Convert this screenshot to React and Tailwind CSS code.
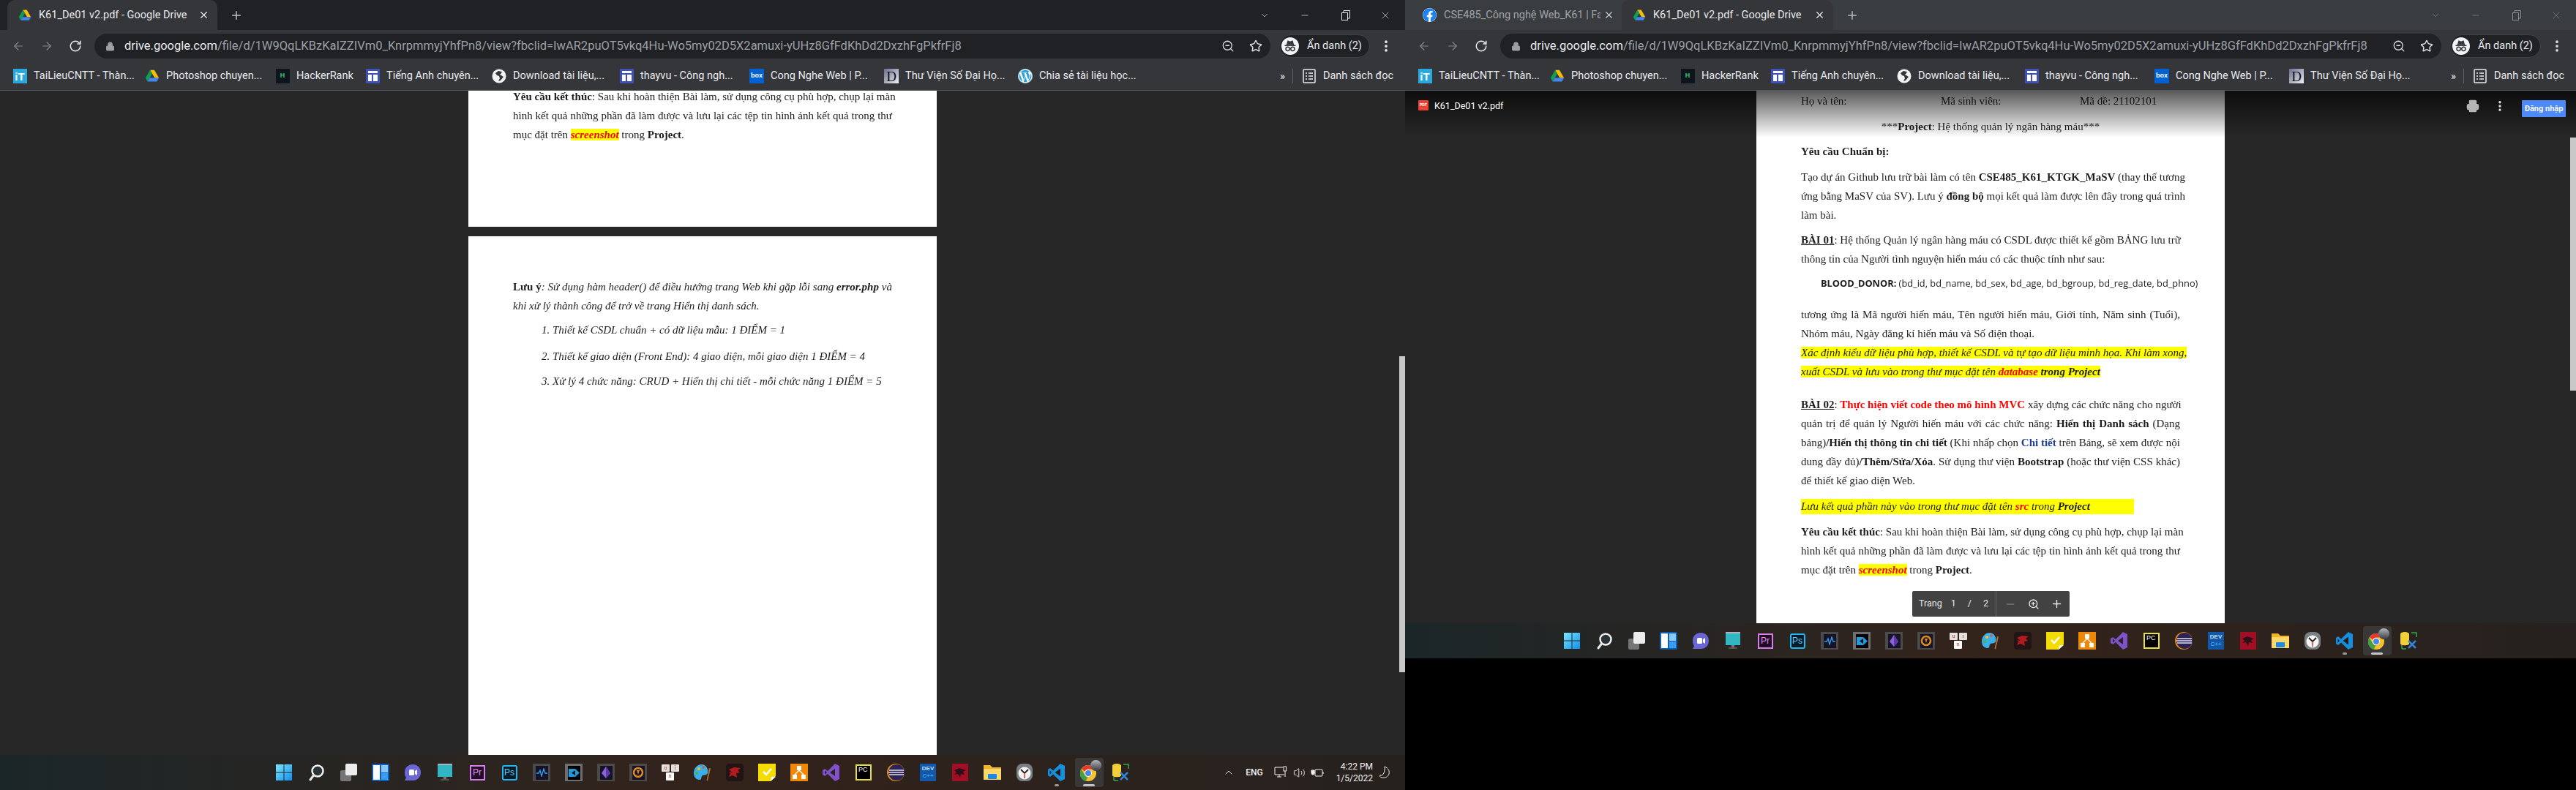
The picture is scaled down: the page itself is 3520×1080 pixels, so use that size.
import { ArrowLeft, ArrowRight, ChevronDown, ChevronUp, EllipsisVertical, Lock, Minus, Plus, Printer, RotateCw, Star, Volume2, X, ZoomIn, ZoomOut } from "lucide-react"
import { FaFacebook, FaWordpress } from "react-icons/fa"

const URL_PATH = "/file/d/1W9QqLKBzKaIZZIVm0_KnrpmmyjYhfPn8/view?fbclid=IwAR2puOT5vkq4Hu-Wo5my02D5X2amuxi-yUHz8GfFdKhDd2DxzhFgPkfrFj8"

const DriveIcon = ({ size = 20 }) => (
    <svg width={size} height={size} viewBox="0 0 24 24">
        <path d="M8.5 2h7L23 15h-7z" fill="#fbbc04" />
        <path d="M8.5 2 1 15l3.5 6L12 8.200z" fill="#0f9d58" />
        <path d="M4.500 21h15L23 15H8z" fill="#4285f4" />
    </svg>
)

const Incognito = () => (
    <span className="flex size-[24px] items-center justify-center rounded-full bg-[#f1f3f4]">
        <svg width="18" height="18" viewBox="0 0 24 24" fill="none" stroke="#35363a" strokeWidth="2">
            <path d="M2 11h20M6 10l2-7 4 1.500L16 3l2 7" fill="#35363a" />
            <circle cx="7.500" cy="17" r="3.500" />
            <circle cx="16.500" cy="17" r="3.500" />
            <path d="M11 17h2" />
        </svg>
    </span>
)

const ReadingList = () => (
    <svg width="18" height="20" viewBox="0 0 18 20" fill="none" stroke="#e8eaed" strokeWidth="1.500">
        <rect x="1" y="1" width="16" height="18" rx="1" />
        <path d="M4 6h2M8 6h6M4 10h2M8 10h6M4 14h2M8 14h6" />
    </svg>
)

// bookmark favicons
const BlueForm = () => (
    <span className="flex h-[20px] w-[19px] flex-col gap-[2px] bg-[#3f51b5] p-[3px]">
        <span className="h-[3px] bg-white" />
        <span className="flex flex-1 gap-[2px]">
            <span className="flex-1 bg-white" />
            <span className="flex-1 bg-white" />
        </span>
    </span>
)

const BOOKMARKS = [
    { label: "TaiLieuCNTT - Thàn...", width: "w-[181px]", icon: <span className="flex h-[20px] w-[19px] items-center justify-center bg-[#29a8e0] font-['Liberation_Sans',sans-serif] text-[15px] leading-none font-bold text-white">iT</span> },
    { label: "Photoshop chuyen...", width: "w-[178px]", icon: <DriveIcon /> },
    { label: "HackerRank", width: "w-[123px]", icon: <span className="flex h-[20px] w-[19px] items-center justify-center bg-[#0e141e] font-['Liberation_Sans',sans-serif] text-[9px] font-bold text-[#2ec866]">H</span> },
    { label: "Tiếng Anh chuyên...", width: "w-[173px]", icon: <BlueForm /> },
    { label: "Download tài liệu,...", width: "w-[174px]", icon: <svg width="20" height="20" viewBox="0 0 20 20"><circle cx="10" cy="10" r="9.500" fill="#f1f3f4" /><path d="M9 3 5 6l2 3 3 1 1 3-2 4 3-1 4-5-3-2-2-1 2-2 1-2z" fill="#35363a" /></svg> },
    { label: "thayvu - Công ngh...", width: "w-[178px]", icon: <BlueForm /> },
    { label: "Cong Nghe Web | P...", width: "w-[184px]", icon: <span className="flex h-[20px] w-[20px] items-center justify-center rounded-[1px] bg-[#0061d5] font-['Liberation_Sans',sans-serif] text-[9px] font-bold text-white">box</span> },
    { label: "Thư Viện Số Đại Họ...", width: "w-[183px]", icon: <span className="flex h-[20px] w-[20px] items-center justify-center bg-linear-to-br from-[#6a6f8f] to-[#f0f0f5] font-['Liberation_Serif',serif] text-[19px] leading-none text-[#111]">D</span> },
    { label: "Chia sẻ tài liệu học...", width: "w-[158px]", icon: <FaWordpress size={20} className="text-[#2d9fd9] bg-white rounded-full" /> },
]

const Bookmarks = ({ showCount }) => (
    <div className="flex h-[38px] items-center bg-[#35363a] pl-[17px] pr-[16px]">
        {BOOKMARKS.slice(0, showCount).map((b) => (
            <div key={b.label} className={`flex shrink-0 items-center gap-[9px] ${b.width}`}>
                <span className="flex w-[20px] shrink-0 justify-center">{b.icon}</span>
                <span className="text-[14.500px] whitespace-nowrap text-[#e8eaed]">{b.label}</span>
            </div>
        ))}
        <div className="ml-auto flex items-center">
            <span className="text-[15px] text-[#e8eaed]">»</span>
            <span className="ml-[10px] h-[20px] w-px bg-[#5f6368]" />
            <span className="ml-[13px]"><ReadingList /></span>
            <span className="ml-[10px] text-[14.500px] whitespace-nowrap text-[#e8eaed]">Danh sách đọc</span>
        </div>
    </div>
)

const Tab = ({ icon, title, active, width, muted }) => (
    <div className={`flex h-[41px] shrink-0 items-center ${width} ${active ? "rounded-t-[10px] bg-[#35363a] pl-[15px] pr-[11px]" : "pl-[24px] pr-[10px]"}`}>
        <span className="shrink-0">{icon}</span>
        <span className={`ml-[10px] mr-[4px] flex-1 overflow-hidden text-[14.500px] whitespace-nowrap ${muted ? "text-[#9ea2a6]" : "text-[#e8eaed]"}`}>{title}</span>
        <X size={15} strokeWidth={2} className={`shrink-0 ${muted ? "text-[#c4c7ca]" : "text-[#e8eaed]"}`} />
    </div>
)

const WindowControls = ({ dim }) => {
    const color = dim ? "text-[#8a8d90]" : "text-[#e8eaed]"
    return (
        <div className={`ml-auto flex items-center ${color}`}>
            <ChevronDown size={14} strokeWidth={1.200} />
            <Minus size={14} strokeWidth={1.200} className="ml-[41px]" />
            <svg width="12" height="14" viewBox="0 0 12 14" fill="none" stroke="currentColor" className="ml-[43px]">
                <rect x="0.500" y="3.500" width="8" height="10" />
                <path d="M3 3V0.500h8.500V11H9" />
            </svg>
            <X size={16} strokeWidth={1} className="ml-[40px] mr-[19px]" />
        </div>
    )
}

const Toolbar = ({ leftPad, dim }) => (
    <div className="flex h-[44px] items-center bg-[#35363a]">
        <div className={`flex items-center ${leftPad}`}>
            <ArrowLeft size={18} strokeWidth={1.500} className="text-[#85888c]" />
            <ArrowRight size={18} strokeWidth={1.500} className="ml-[21px] text-[#85888c]" />
            <RotateCw size={18} strokeWidth={2} className="ml-[21px] text-[#e8eaed]" />
        </div>
        <div className="ml-[17px] flex h-[34px] min-w-0 flex-1 items-center rounded-full bg-[#202124] pl-[15px] pr-[11px]">
            <Lock size={13} className="shrink-0 text-[#9aa0a6]" fill="#9aa0a6" />
            <span className="ml-[13px] min-w-0 flex-1 overflow-hidden text-[16.500px] leading-[22px] whitespace-nowrap">
                <span className="text-[#e8eaed]">drive.google.com</span>
                <span className="text-[#9aa0a6]">{URL_PATH}</span>
            </span>
            <ZoomOut size={18} strokeWidth={1.700} className="ml-[8px] shrink-0 text-[#dadce0]" />
            <Star size={18} strokeWidth={2} className="ml-[20px] shrink-0 text-[#dadce0]" />
        </div>
        <div className="ml-[12px] flex h-[32px] w-[124px] items-center rounded-full border border-[#3f4145] bg-[#202124] pl-[2px]">
            <Incognito />
            <span className="ml-[11px] text-[14.500px] whitespace-nowrap text-[#e8eaed]">Ẩn danh (2)</span>
        </div>
        <EllipsisVertical size={20} strokeWidth={2.500} className={`ml-[12px] mr-[16px] ${dim ? "text-[#dadce0]" : "text-[#e8eaed]"}`} />
    </div>
)

// taskbar tiles, text ones stay real text
const Tile = ({ className, children }) => (
    <span className={`flex items-center justify-center font-['Liberation_Sans',sans-serif] ${className}`}>{children}</span>
)

const GrayTile = ({ light, children }) => (
    <span className={`flex h-[24px] w-[24px] items-center justify-center ${light ? "bg-[#6e6e6e]" : "bg-[#4a4a4a]"}`}>
        <span className={`flex h-[19px] w-[17px] items-center justify-center ${light ? "bg-black" : "bg-[#171327]"}`}>{children}</span>
    </span>
)

const TASK_ICONS = [
    <svg key="win" width="24" height="24" viewBox="0 0 24 24"><defs><linearGradient id="w" x1="0" y1="0" x2="1" y2="1"><stop offset="0" stopColor="#7ae6fb" /><stop offset="1" stopColor="#0f8ff0" /></linearGradient></defs><path d="M1 1h10.500v10.500H1zM12.500 1H23v10.500H12.500zM1 12.500h10.500V23H1zM12.500 12.500H23V23H12.500z" fill="url(#w)" /></svg>,
    <svg key="search" width="24" height="24" viewBox="0 0 24 24" fill="none"><circle cx="14" cy="10" r="7.500" stroke="#f1f1f1" strokeWidth="2.500" fill="#2a3335" /><path d="M8.500 16 4 22" stroke="#e8e8e8" strokeWidth="3" strokeLinecap="round" /></svg>,
    <span key="tasks" className="relative block size-[24px]"><span className="absolute top-[9px] left-[1px] size-[15px] rounded-[2px] bg-[#767676]" /><span className="absolute top-0 left-[8px] size-[16px] rounded-[2px] bg-[#ececec]" /></span>,
    <span key="widgets" className="flex size-[24px] gap-[2px] rounded-[2px] bg-[#0f5fb4] p-[2px]"><span className="flex-1 bg-white" /><span className="flex flex-1 flex-col gap-[1px]"><span className="flex-1 bg-[#8cc8f5]" /><span className="flex-1 bg-[#3a9bef]" /></span></span>,
    <svg key="chat" width="24" height="24" viewBox="0 0 24 24"><path d="M12 1c7 0 11 5 11 11s-4 11-11 11H1l2-4C1.500 17 1 15 1 12 1 6 5 1 12 1z" fill="#6b66d6" /><rect x="7" y="8" width="7" height="8" rx="1.500" fill="#fff" /><path d="m15 10 3-2v8l-3-2z" fill="#fff" /></svg>,
    <svg key="pc" width="24" height="24" viewBox="0 0 24 24"><rect x="2" y="0" width="20" height="18" fill="#32b6c4" /><rect x="2" y="0" width="20" height="2" fill="#a9b6ba" /><rect x="10" y="18" width="4" height="3" fill="#777" /><rect x="6" y="21" width="12" height="2" fill="#555" /></svg>,
    <Tile key="pr" className="h-[21px] w-[21px] border-2 border-[#d77ce8] bg-[#1f0d25] text-[12px] text-[#e88af5]">Pr</Tile>,
    <Tile key="ps" className="h-[21px] w-[21px] rounded-[3px] border-2 border-[#21b7f2] bg-[#071a28] text-[12px] text-[#5fcdf5]">Ps</Tile>,
    <GrayTile key="au"><svg width="15" height="12" viewBox="0 0 15 12" fill="none" stroke="#32a5f0" strokeWidth="1.300"><path d="M0 7h3l2-4 2 8 3-10 2 6h3" /></svg></GrayTile>,
    <GrayTile key="ke" light><svg width="15" height="15" viewBox="0 0 15 15"><path d="M0 2h9l6 5.500L9 13H0z" fill="#1f9be0" /><path d="M4 7.500 9 4v7z" fill="#101010" /></svg></GrayTile>,
    <GrayTile key="gem"><svg width="12" height="16" viewBox="0 0 12 16"><path d="M6 0 12 9l-6 7-6-7z" fill="#8d62d8" /><path d="M6 0v16l6-7z" fill="#5d3aa8" /></svg></GrayTile>,
    <GrayTile key="orange"><svg width="16" height="16" viewBox="0 0 16 16" fill="none"><circle cx="8" cy="8" r="6" stroke="#e08a1a" strokeWidth="2.500" /><path d="M6 5h4l-2 6z" fill="#e08a1a" /></svg></GrayTile>,
    <span key="uni" className="relative block size-[24px] font-['Liberation_Serif',serif] text-[8px] leading-[10px] text-[#c0392b]"><span className="absolute top-[1px] left-0 h-[10px] w-[11px] rounded-[1px] bg-[#e4e0dc] text-center">u</span><span className="absolute top-[1px] right-0 h-[10px] w-[11px] rounded-[1px] bg-[#e4e0dc] text-center">i</span><span className="absolute top-[12px] left-[6px] h-[11px] w-[11px] rounded-[1px] bg-white text-center">n</span></span>,
    <svg key="paint" width="24" height="24" viewBox="0 0 24 24"><path d="M11 1C4 1 0 7 0 13s4 9 8 9c3 0 2-3 3-5s4-1 6-2c2-1 3-3 2-7-1-4-4-7-8-7z" fill="#3bb0e8" /><circle cx="7" cy="7" r="2" fill="#f5c518" /><circle cx="13" cy="5" r="1.800" fill="#e5533d" /><circle cx="4" cy="13" r="2" fill="#4caf50" /><path d="m21 6 2 .5-4 17-1.500-.4z" fill="#a9713a" /></svg>,
    <span key="msi" className="flex size-[24px] items-center justify-center rounded-[4px] bg-[#201414]"><svg width="20" height="20" viewBox="0 0 20 20"><path d="M2 6 9 3l9 1-4 3 3 3-5 1 1 6-6-3-5 2 2-5-2-2 5 1z" fill="#b51a1f" /></svg></span>,
    <svg key="note" width="24" height="24" viewBox="0 0 24 24"><path d="M0 0h24v17l-7 7H0z" fill="#f5dc00" /><path d="m17 24 1-6h6z" fill="#fff" /><path d="m7 11 4 4 7-8" stroke="#fff" strokeWidth="2.500" fill="none" /></svg>,
    <span key="drawio" className="flex size-[24px] items-center justify-center bg-[#f08705]"><svg width="18" height="18" viewBox="0 0 18 18" fill="#fff"><rect x="6" y="0" width="6" height="6" /><rect x="0" y="12" width="6" height="6" /><rect x="12" y="12" width="6" height="6" /><path d="M9 6 3 12M9 6l6 6" stroke="#fff" strokeWidth="1.300" /></svg></span>,
    <svg key="vs" width="24" height="24" viewBox="0 0 24 24"><path d="M17 0 23 3v18l-6 3-10-10-4 3-3-2V9l3-2 4 3z" fill="#7f52c9" /><path d="M17 7 10 12l7 5zM3 9.500v5L6 12z" fill="#2c2322" /></svg>,
    <Tile key="pc2" className="h-[22px] w-[22px] items-start justify-start border-2 border-[#e8e23c] bg-black pl-[2px] text-[9px] leading-[11px] text-white">PC</Tile>,
    <svg key="eclipse" width="24" height="24" viewBox="0 0 24 24"><circle cx="12" cy="12" r="12" fill="#e08a1a" /><circle cx="13" cy="12" r="11" fill="#2c2255" /><path d="M3 9h20M2 12h21M3 15h20" stroke="#dfe0f0" strokeWidth="1.500" /></svg>,
    <Tile key="dev" className="h-[24px] w-[22px] flex-col bg-[#1257a8] text-[8px] leading-[10px] font-bold text-[#bfe0ff]">DEV<span className="text-[#3aa0f0]">C++</span></Tile>,
    <span key="red" className="flex h-[24px] w-[22px] items-center justify-center bg-[#a20f24]"><svg width="18" height="16" viewBox="0 0 18 16"><path d="M1 5 8 2l9 3-4 2 2 4-5-1-1 5-3-5-5 1 3-3z" fill="#2b1018" /></svg></span>,
    <svg key="folder" width="24" height="24" viewBox="0 0 24 24"><path d="M0 2h9l3 3h12v17H0z" fill="#f0b429" /><path d="M0 7h24v15H0z" fill="#fcd76a" /><rect x="6" y="14" width="12" height="7" rx="1" fill="#1e88e5" /></svg>,
    <svg key="clock" width="24" height="24" viewBox="0 0 24 24"><rect x="1" y="0" width="22" height="24" rx="8" fill="#7a7f84" /><circle cx="12" cy="13" r="8.500" fill="#f5f5f5" /><path d="M12 13 7 8M12 13l5-5" stroke="#222" strokeWidth="1.800" /><path d="M12 13v7" stroke="#d9342b" strokeWidth="1.500" /></svg>,
    <svg key="vsc" width="24" height="24" viewBox="0 0 24 24"><path d="M17 0 23 3v18l-6 3L7 14.500 3 18l-3-2V8l3-2 4 3.500z" fill="#1590e0" /><path d="M17 6.500 9.500 12l7.500 5.500zM2.500 9v6L5 12z" fill="#241e1b" /></svg>,
    <span key="chrome" className="relative block size-[24px]"><svg width="24" height="24" viewBox="0 0 24 24"><circle cx="11" cy="13" r="11" fill="#fbc02d" /><path d="M11 2a11 11 0 0 1 9.500 5.500H11a5.500 5.500 0 0 0-5 3L2 7a11 11 0 0 1 9-5z" fill="#e53935" /><path d="M1.500 7.500 6 15a5.500 5.500 0 0 0 4.500 3.500L7.500 24A11 11 0 0 1 1.500 7.500z" fill="#43a047" /><circle cx="11" cy="13" r="4.500" fill="#4285f4" stroke="#fff" /></svg><span className="absolute -top-[5px] -right-[5px] size-[15px] rounded-full bg-linear-to-b from-[#b4bac0] to-[#3b3d40]" /></span>,
    <svg key="db" width="24" height="24" viewBox="0 0 24 24" fill="none"><path d="M0 3c0-4 12-4 12 0v13c0 3-12 3-12 0z" fill="#f2d03a" /><path d="M15 1h7v6M2 23v-5M2 23h6" stroke="#36a853" strokeWidth="1.500" /><path d="m11 12 10 10M21 12 11 22" stroke="#2f86d6" strokeWidth="2.500" /></svg>,
]

const SystemTray = () => (
    <div className="flex h-full items-center justify-end text-[#f1f1f1]">
        <ChevronUp size={16} strokeWidth={1.500} />
        <span className="ml-[15px] text-[12px] font-medium">ENG</span>
        <svg width="18" height="18" viewBox="0 0 18 18" fill="none" stroke="currentColor" className="ml-[15px]"><path d="M12 2H1v10h13M7 12v3M4 15h6" /><rect x="13" y="1" width="3.500" height="6" /><path d="M15 7v8" /></svg>
        <Volume2 size={17} strokeWidth={1.300} className="ml-[8px]" />
        <svg width="18" height="18" viewBox="0 0 18 18" fill="none" stroke="currentColor" className="ml-[7px]"><rect x="6" y="5" width="10" height="9" rx="1" /><path d="M17 8v3" /><path d="M1 9h5" /><path d="M1 6h4v4a2 2 0 0 1-4 0z" fill="currentColor" /></svg>
        <div className="ml-[17px] flex flex-col items-end text-[12px] leading-[16px]">
            <span>4:22 PM</span>
            <span>1/5/2022</span>
        </div>
        <svg width="16" height="18" viewBox="0 0 16 18" fill="none" stroke="currentColor" className="ml-[8px] mr-[20px]"><path d="M8 1c5 2 7 6 6 10-1 4-6 6-10 5-3-1-3-3-2-3 4 1 7-5 6-12z" /></svg>
    </div>
)

const Taskbar = ({ tray }) => (
    <div className="grid h-[48px] shrink-0 grid-cols-[1fr_auto_1fr] items-center bg-linear-to-r from-[#1b2628] via-[#33231b] to-[#26211e]">
        <div />
        <div className="flex">
            {TASK_ICONS.map((icon) => (
                <div key={icon.key} className="relative flex h-[48px] w-[44px] items-center justify-center">
                    {icon.key === "chrome" && <span className="absolute top-[4px] left-[3px] h-[40px] w-[39px] rounded-[4px] bg-[#3a3836]" />}
                    <span className="relative">{icon}</span>
                    {icon.key === "vsc" && <span className="absolute bottom-[5px] h-[3px] w-[6px] rounded-full bg-[#9b9b9b]" />}
                    {icon.key === "chrome" && <span className="absolute bottom-[5px] h-[3px] w-[16px] rounded-full bg-[#c4c4c4]" />}
                </div>
            ))}
        </div>
        {tray ? <SystemTray /> : <div />}
    </div>
)

// one line of a PDF page, stretched across the column like the justified original
const L = ({ children, last, indent, className = "" }) => (
    <div className={`h-[26px] whitespace-nowrap leading-[26px] ${last ? "" : "text-justify [text-align-last:justify]"} ${indent ? "pl-[39px]" : ""} ${className}`}>{children}</div>
)

const Mark = ({ children }) => <span className="bg-[#ffff00]">{children}</span>

const Hot = ({ children }) => <b className="text-[#ff0000]">{children}</b>

const ClosingBlock = () => (
    <>
        <L><b>Yêu cầu kết thúc</b>: Sau khi hoàn thiện Bài làm, sử dụng công cụ phù hợp, chụp lại màn</L>
        <L>hình kết quả những phần đã làm được và lưu lại các tệp tin hình ảnh kết quả trong thư</L>
        <L last>mục đặt trên <Mark><i><Hot>screenshot</Hot></i></Mark> trong <b>Project</b>.</L>
    </>
)

const Page = ({ className, children }) => (
    <div className={`w-[640px] bg-white px-[61px] font-['Liberation_Serif',serif] text-[15px] text-[#1c1c1c] [filter:blur(0.35px)] ${className}`}>{children}</div>
)

const LeftViewer = () => (
    <div className="relative min-h-0 flex-1 overflow-hidden bg-[#272727]">
        <div className="flex flex-col items-center gap-[13px]">
            <Page className="h-[186px]">
                <div className="-mt-[5px]"><ClosingBlock /></div>
            </Page>
            <Page className="h-[710px] pt-[56px]">
                <L><b>Lưu ý</b><i>: Sử dụng hàm header() để điều hướng trang Web khi gặp lỗi sang </i><b><i>error.php</i></b><i> và</i></L>
                <L last><i>khi xử lý thành công để trở về trang Hiển thị danh sách.</i></L>
                <L last indent className="mt-[7px]"><i>1. Thiết kế CSDL chuẩn + có dữ liệu mẫu: 1 ĐIỂM = 1</i></L>
                <L last indent className="mt-[10px]"><i>2. Thiết kế giao diện (Front End): 4 giao diện, mỗi giao diện 1 ĐIỂM = 4</i></L>
                <L last indent className="mt-[8px]"><i>3. Xử lý 4 chức năng: CRUD + Hiển thị chi tiết - mỗi chức năng 1 ĐIỂM = 5</i></L>
            </Page>
        </div>
        <div className="absolute top-[363px] right-0 h-[432px] w-[8px] bg-[#c8c8c8]" />
    </div>
)

const RightViewer = () => (
    <div className="relative min-h-0 flex-1 overflow-hidden bg-[#272727]">
        <div className="flex justify-center">
            <Page className="h-[729px] pt-[1px]">
                <div className="flex h-[26px] leading-[26px]">
                    <span className="w-[191px]">Họ và tên:</span>
                    <span className="w-[190px]">Mã sinh viên:</span>
                    <span>Mã đề: 21102101</span>
                </div>
                <L last className="mt-[9px] text-center">***<b>Project</b>: Hệ thống quản lý ngân hàng máu***</L>
                <L last className="mt-[8px]"><b>Yêu cầu Chuẩn bị:</b></L>
                <L className="mt-[9px]">Tạo dự án Github lưu trữ bài làm có tên <b>CSE485_K61_KTGK_MaSV</b> (thay thế tương</L>
                <L>ứng bằng MaSV của SV). Lưu ý <b>đồng bộ</b> mọi kết quả làm được lên đây trong quá trình</L>
                <L last>làm bài.</L>
                <L className="mt-[8px]"><b><u>BÀI 01</u></b>: Hệ thống Quản lý ngân hàng máu có CSDL được thiết kế gồm BẢNG lưu trữ</L>
                <L last>thông tin của Người tình nguyện hiến máu có các thuộc tính như sau:</L>
                <L last className="mt-[7px] pl-[27px] font-['Open_Sans',sans-serif] text-[12.800px]"><b>BLOOD_DONOR:</b> (bd_id, bd_name, bd_sex, bd_age, bd_bgroup, bd_reg_date, bd_phno)</L>
                <L className="mt-[17px]">tương ứng là Mã người hiến máu, Tên người hiến máu, Giới tính, Năm sinh (Tuổi),</L>
                <L last>Nhóm máu, Ngày đăng kí hiến máu và Số điện thoại.</L>
                <L><Mark><i>Xác định kiểu dữ liệu phù hợp, thiết kế CSDL và tự tạo dữ liệu minh họa. Khi làm xong,</i></Mark></L>
                <L last><Mark><i>xuất CSDL và lưu vào trong thư mục đặt tên <Hot>database</Hot> <b>trong Project</b></i></Mark></L>
                <L className="mt-[19px]"><b><u>BÀI 02</u></b>: <Hot>Thực hiện viết code theo mô hình MVC</Hot> xây dựng các chức năng cho người</L>
                <L>quản trị để quản lý Người hiến máu với các chức năng: <b>Hiển thị Danh sách</b> (Dạng</L>
                <L>bảng)<b>/Hiển thị thông tin chi tiết</b> (Khi nhấp chọn <b className="text-[#1f3f8f]">Chi tiết</b> trên Bảng, sẽ xem được nội</L>
                <L>dung đầy đủ)<b>/Thêm/Sửa/Xóa</b>. Sử dụng thư viện <b>Bootstrap</b> (hoặc thư viện CSS khác)</L>
                <L last>để thiết kế giao diện Web.</L>
                <L last className="mt-[9px]"><span className="inline-block w-[455px] bg-[#ffff00] leading-[21px]"><i>Lưu kết quả phần này vào trong thư mục đặt tên <Hot>src</Hot> trong <b>Project</b></i></span></L>
                <div className="mt-[9px]"><ClosingBlock /></div>
            </Page>
        </div>

        {/* viewer header over the page */}
        <div className="absolute inset-x-0 top-0 flex h-[64px] items-start bg-linear-to-b from-black/65 to-transparent pl-[18px] pr-[14px] pt-[13px] text-white">
            <span className="flex h-[14px] w-[14px] items-center justify-center rounded-[1px] bg-[#ea4335] font-['Liberation_Sans',sans-serif] text-[5px] font-bold">PDF</span>
            <span className="ml-[8px] text-[12.500px] leading-[16px]">K61_De01 v2.pdf</span>
            <Printer size={18} className="ml-auto mt-[-1px] text-[#b5b5b5]" fill="#b5b5b5" />
            <EllipsisVertical size={18} strokeWidth={2.500} className="ml-[19px] mt-[-1px] text-[#e0e0e0]" />
            <span className="ml-[21px] h-[23px] w-[60px] rounded-[1px] bg-[#4d8af5] text-center text-[11px] leading-[23px] font-semibold whitespace-nowrap">Đăng nhập</span>
        </div>

        {/* page controls */}
        <div className="absolute bottom-[9px] left-[693px] flex h-[35px] w-[215px] items-center rounded-[2px] bg-[#424242] text-[12.500px] text-[#e8e8e8]">
            <span className="ml-[9px]">Trang</span>
            <span className="ml-[12px]">1</span>
            <span className="ml-[16px]">/</span>
            <span className="ml-[16px]">2</span>
            <span className="ml-auto h-full w-px bg-[#666]" />
            <Minus size={16} className="ml-[11px] text-[#777]" />
            <ZoomIn size={16} className="ml-[16px]" />
            <Plus size={17} className="ml-[15px] mr-[9px]" />
        </div>

        <div className="absolute top-[64px] right-0 h-[346px] w-[8px] bg-[#c8c8c8]" />
    </div>
)

const LeftWindow = () => (
    <div className="flex h-[1080px] w-[1920px] shrink-0 flex-col">
        <div className="flex h-[41px] items-center bg-[#202124] pl-[10px]">
            <Tab icon={<DriveIcon size={18} />} title="K61_De01 v2.pdf - Google Drive" active width="w-[287px]" />
            <Plus size={18} className="ml-[17px] text-[#bdc1c6]" />
            <WindowControls />
        </div>
        <Toolbar leftPad="pl-[16px]" />
        <Bookmarks showCount={9} />
        <div className="h-px bg-[#55565a]" />
        <LeftViewer />
        <Taskbar tray />
    </div>
)

const RightWindow = () => (
    <div className="flex h-[900px] w-[1600px] shrink-0 flex-col">
        <div className="flex h-[41px] items-center bg-[#3a3d40]">
            <Tab icon={<FaFacebook size={19} className="rounded-full bg-white text-[#1b84f2]" />} title="CSE485_Công nghệ Web_K61 | Fa" muted width="w-[296px]" />
            <Tab icon={<DriveIcon size={18} />} title="K61_De01 v2.pdf - Google Drive" active width="w-[289px]" />
            <Plus size={18} className="ml-[17px] text-[#b5b8bb]" />
            <WindowControls dim />
        </div>
        <Toolbar leftPad="pl-[17px]" dim />
        <Bookmarks showCount={8} />
        <div className="h-px bg-[#55565a]" />
        <RightViewer />
        <Taskbar />
    </div>
)

export default function App() {
    return (
        <div className="flex h-[1080px] w-[3520px] items-start overflow-hidden bg-black font-['Roboto',sans-serif]">
            <LeftWindow />
            <RightWindow />
        </div>
    )
}
